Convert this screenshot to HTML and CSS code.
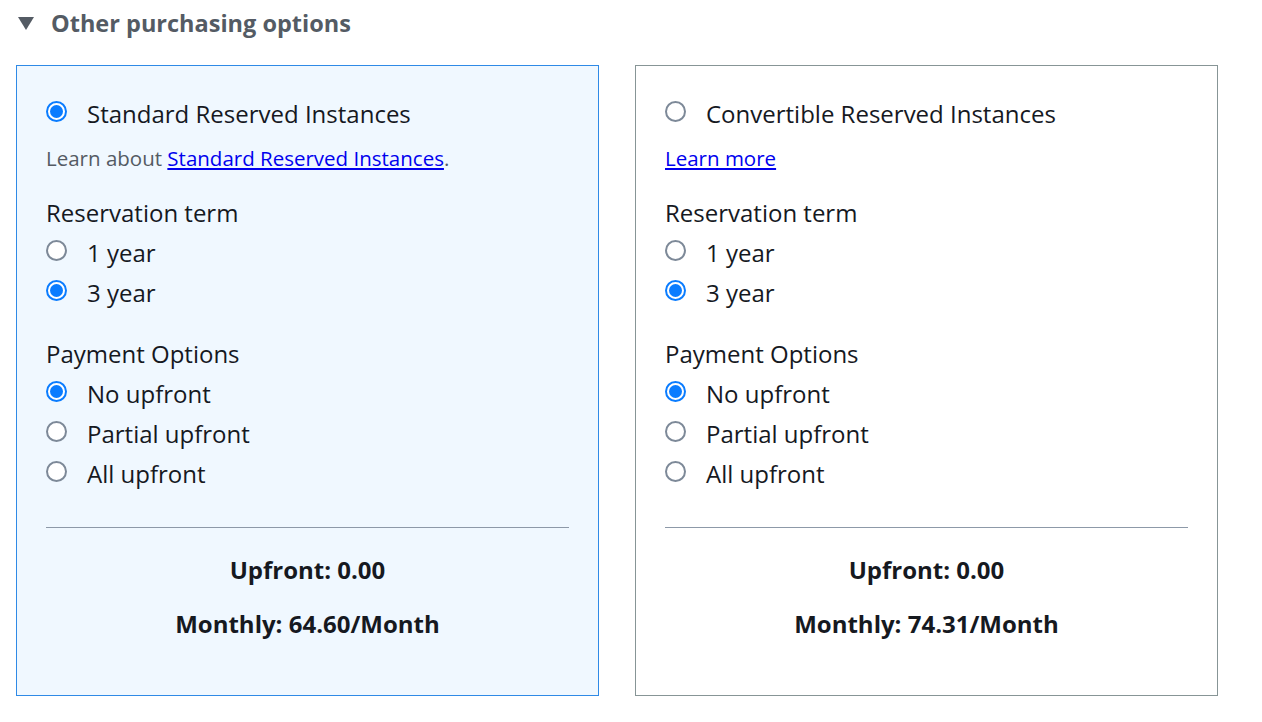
FILE: index.html
```html
<!DOCTYPE html>
<html>
<head>
<meta charset="utf-8">
<link rel="stylesheet" href="styles.css">
</head>
<body>
<div class="page">
  <div class="section-header">
    <span class="caret"></span>
    <span class="section-title">Other purchasing options</span>
  </div>
  <div class="cards">
    <div class="card card-selected">
      <div class="radio-row title-row"><span class="radio checked"></span><span class="radio-label">Standard Reserved Instances</span></div>
      <div class="learn">Learn about <a href="#">Standard Reserved Instances</a>.</div>
      <div class="group-label first-group">Reservation term</div>
      <div class="radio-row"><span class="radio"></span><span class="radio-label">1 year</span></div>
      <div class="radio-row"><span class="radio checked"></span><span class="radio-label">3 year</span></div>
      <div class="group-label second-group">Payment Options</div>
      <div class="radio-row"><span class="radio checked"></span><span class="radio-label">No upfront</span></div>
      <div class="radio-row"><span class="radio"></span><span class="radio-label">Partial upfront</span></div>
      <div class="radio-row"><span class="radio"></span><span class="radio-label">All upfront</span></div>
      <div class="divider"></div>
      <div class="price upfront">Upfront: 0.00</div>
      <div class="price monthly">Monthly: 64.60/Month</div>
    </div>
    <div class="card">
      <div class="radio-row title-row"><span class="radio"></span><span class="radio-label">Convertible Reserved Instances</span></div>
      <div class="learn"><a href="#">Learn more</a></div>
      <div class="group-label first-group">Reservation term</div>
      <div class="radio-row"><span class="radio"></span><span class="radio-label">1 year</span></div>
      <div class="radio-row"><span class="radio checked"></span><span class="radio-label">3 year</span></div>
      <div class="group-label second-group">Payment Options</div>
      <div class="radio-row"><span class="radio checked"></span><span class="radio-label">No upfront</span></div>
      <div class="radio-row"><span class="radio"></span><span class="radio-label">Partial upfront</span></div>
      <div class="radio-row"><span class="radio"></span><span class="radio-label">All upfront</span></div>
      <div class="divider"></div>
      <div class="price upfront">Upfront: 0.00</div>
      <div class="price monthly">Monthly: 74.31/Month</div>
    </div>
  </div>
</div>
</body>
</html>
```

FILE: styles.css
```css
* { box-sizing: border-box; }
html, body { margin: 0; padding: 0; background: #ffffff; }
body {
  font-family: "Open Sans", "Noto Sans", sans-serif;
  color: #16191f;
}
.page { padding: 0 0 0 16px; }
.section-header {
  display: flex;
  align-items: center;
  height: 46px;
  margin-bottom: 19px;
}
.caret {
  width: 0; height: 0;
  margin-left: 2px;
  border-left: 8px solid transparent;
  border-right: 8px solid transparent;
  border-top: 13px solid #545b64;
  margin-top: 1px;
}
.section-title {
  margin-left: 17px;
  font-size: 23.5px;
  font-weight: 700;
  color: #545b64;
}
.cards {
  display: flex;
  gap: 36px;
}
.card {
  width: 583px;
  border: 1px solid #879596;
  padding: 28px 29px 51px 29px;
  background: #ffffff;
}
.card-selected {
  border-color: #2f8ae6;
  background: #f0f8ff;
}
.radio-row {
  display: flex;
  align-items: center;
  height: 40px;
}
.radio {
  width: 21px; height: 21px;
  border-radius: 50%;
  border: 2px solid #7d8998;
  background: #ffffff;
  flex: none;
  position: relative;
  margin-top: -5px;
}
.radio.checked {
  border-color: #0a7cff;
  background: #ffffff;
}
.radio.checked::after {
  content: "";
  position: absolute;
  left: 2px; top: 2px; right: 2px; bottom: 2px;
  border-radius: 50%;
  background: #0a7cff;
}
.radio-label {
  margin-left: 20px;
  font-size: 24px;
  line-height: 40px;
}
.learn {
  margin-top: 4px;
  height: 40px;
  line-height: 40px;
  font-size: 20.5px;
  color: #545b64;
}
.learn a { color: #0000ee; text-decoration: underline; }
.group-label {
  font-size: 24px;
  line-height: 40px;
  height: 40px;
}
.first-group { margin-top: 15px; }
.second-group { margin-top: 21px; }
.divider {
  margin-top: 33px;
  height: 1px;
  background: #8d99a8;
}
.price {
  text-align: center;
  font-size: 24px;
  font-weight: 700;
  line-height: 40px;
  height: 40px;
}
.upfront { margin-top: 22px; }
.monthly { margin-top: 14px; }
```
